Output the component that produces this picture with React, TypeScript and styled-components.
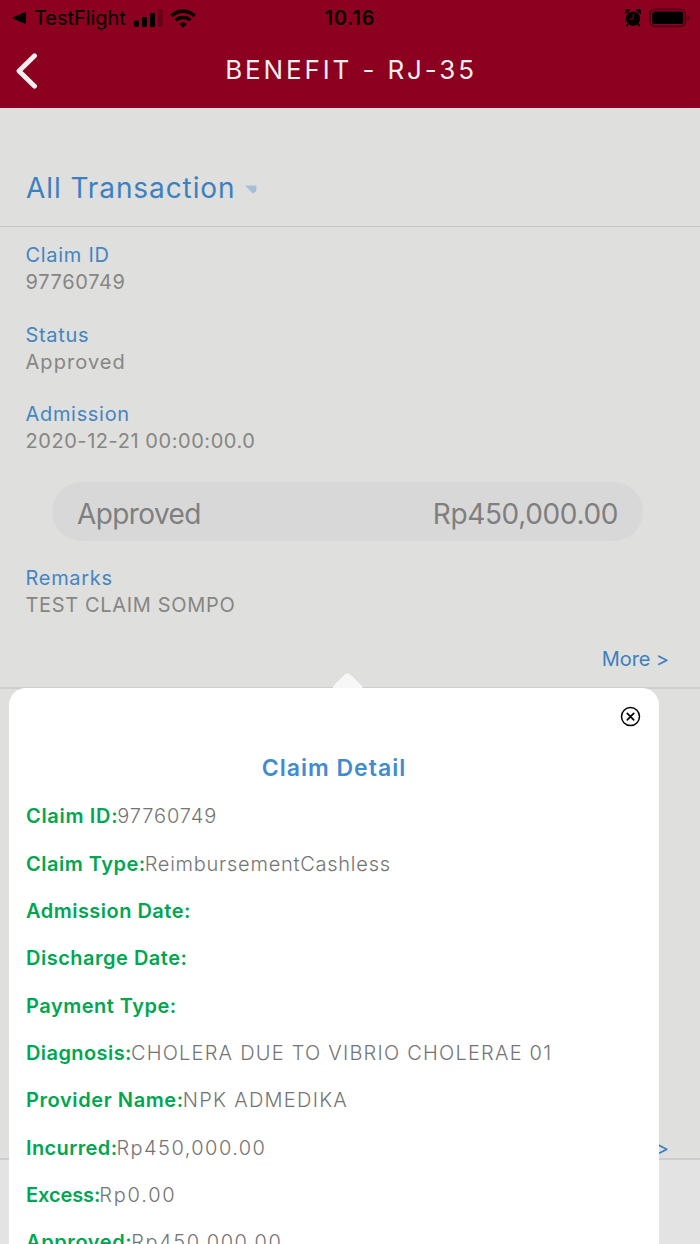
import React from 'react';
import styled, { createGlobalStyle } from 'styled-components';

const Global = createGlobalStyle`
  *, *::before, *::after { box-sizing: border-box; }
  body { margin: 0; background: #dfdfdd; }
`;

const Screen = styled.div`
  position: relative;
  width: 700px;
  height: 1244px;
  overflow: hidden;
  display: flex;
  flex-direction: column;
  background: #dfdfdd;
  font-family: Inter, 'Liberation Sans', sans-serif;
  font-size: 20px;
  line-height: 27px;
`;

const Text = styled.span<{ $track?: number }>`
  letter-spacing: ${p => p.$track ?? 0.6}px;
  white-space: nowrap;
`;

/* header */
const Header = styled.header`
  height: 108px;
  flex: none;
  background: #8c0020;
`;

const StatusBar = styled.div`
  height: 36px;
  padding: 0 10px 0 13px;
  display: grid;
  grid-template-columns: 1fr auto 1fr;
  align-items: center;
  color: #000;
`;

const StatusGroup = styled.div<{ $end?: boolean }>`
  display: flex;
  align-items: center;
  justify-content: ${p => (p.$end ? 'flex-end' : 'flex-start')};
`;

const AppName = styled(Text)`
  margin: 0 8px 0 8px;
`;

const Clock = styled(Text)`
  margin-right: 3px;
  font-size: 19.5px;
  font-weight: 600;
`;

const Signal = styled.svg`
  margin-right: 6px;
`;

const Alarm = styled.svg`
  margin-right: 8px;
`;

const NavBar = styled.div`
  height: 66px;
  padding: 0 16px;
  display: grid;
  grid-template-columns: 24px 1fr 24px;
  align-items: center;
  color: #f0eeee;
`;

const NavTitle = styled.h1`
  margin: 0;
  padding-left: 2px;
  text-align: center;
  font-size: 26px;
  font-weight: 400;
`;

const BackIcon = styled.svg`
  margin-top: 3px;
`;

/* transaction list */
const Filter = styled.div`
  height: 119px;
  flex: none;
  padding: 61px 0 0 26px;
  display: flex;
  align-items: flex-start;
  border-bottom: 1px solid #c6c6c9;
  color: #3d80c0;
  font-size: 28px;
  line-height: 38px;
`;

const Caret = styled.svg`
  margin: 16px 0 0 10px;
`;

const Transaction = styled.section<{ $height: number }>`
  height: ${p => p.$height}px;
  flex: none;
  padding: 15px 31px 0 25.5px;
  display: flex;
  flex-direction: column;
  border-bottom: 2px solid #cdcdcd;
`;

const Field = styled.div<{ $gap?: number }>`
  display: flex;
  flex-direction: column;
  margin-bottom: ${p => p.$gap ?? 0}px;
`;

const Label = styled(Text)`
  color: #4585c2;
`;

const Value = styled(Text)`
  color: #868684;
`;

const AmountPill = styled.div`
  height: 59px;
  margin: 0 26px 24px;
  padding: 6px 25px 0 25.5px;
  display: flex;
  align-items: center;
  justify-content: space-between;
  border-radius: 30px;
  background: #d8d8d8;
  color: #7f7f7f;
  font-size: 28px;
`;

const More = styled.div<{ $bottom: number }>`
  margin-top: auto;
  margin-bottom: ${p => p.$bottom}px;
  text-align: right;
  color: #3d80c0;
`;

const Rest = styled.div`
  flex: 1;
  background: #e3e3e3;
`;

/* popover */
const Popover = styled.div`
  position: absolute;
  top: 673px;
  left: 9px;
  width: 650px;
  height: 571px;
  display: flex;
  flex-direction: column;
`;

const Arrow = styled.svg`
  flex: none;
  margin-left: 323px;
`;

const Sheet = styled.div`
  flex: 1;
  min-height: 0;
  overflow: hidden;
  padding: 18px 17px 0;
  display: flex;
  flex-direction: column;
  border-radius: 17px 17px 0 0;
  background: #fff;
`;

const CloseIcon = styled.svg`
  flex: none;
  align-self: flex-end;
`;

const SheetTitle = styled.h2`
  margin: 22px 0 17.3px;
  text-align: center;
  color: #428bce;
  font-size: 23px;
  font-weight: 600;
  line-height: 36px;
`;

const DetailRow = styled.div`
  height: 47.35px;
  flex: none;
  display: flex;
  align-items: flex-start;
`;

const DetailLabel = styled(Text)`
  color: #00a651;
  font-weight: 600;
`;

const DetailValue = styled(Text)`
  margin-left: -1px;
  color: #747474;
  font-weight: 300;
`;

type Detail = { label: string; value?: string; lt: number; vt?: number };

const details: Detail[] = [
  { label: 'Claim ID:', value: '97760749', lt: 0.68, vt: 0.9 },
  { label: 'Claim Type:', value: 'ReimbursementCashless', lt: 0.5, vt: 0.75 },
  { label: 'Admission Date:', lt: 0.48 },
  { label: 'Discharge Date:', lt: 0.5 },
  { label: 'Payment Type:', lt: 0.5 },
  { label: 'Diagnosis:', value: 'CHOLERA DUE TO VIBRIO CHOLERAE 01', lt: 0.42, vt: 1.22 },
  { label: 'Provider Name:', value: 'NPK ADMEDIKA', lt: 0.6, vt: 1.27 },
  { label: 'Incurred:', value: 'Rp450,000.00', lt: 0.38, vt: 1.45 },
  { label: 'Excess:', value: 'Rp0.00', lt: -0.09, vt: 1.8 },
  { label: 'Approved:', value: 'Rp450,000.00', lt: 0.6, vt: 1.55 },
];

export default function App() {
  return (
    <>
      <Global />
      <Screen>
        <Header>
          <StatusBar>
            <StatusGroup>
              <svg width="13" height="12" viewBox="0 0 13 12">
                <path d="M0.5 5.2 L11.5 0.2 Q13 0 13 1.2 V10.8 Q13 12 11.5 11.8 L0.5 6.8 Q-0.3 6 0.5 5.2Z" />
              </svg>
              <AppName $track={-0.05}>TestFlight</AppName>
              <Signal width="30" height="18" viewBox="0 0 30 18">
                <rect x="0" y="11.5" width="5" height="6.5" rx="1.4" />
                <rect x="8" y="8" width="5" height="10" rx="1.4" />
                <rect x="16" y="4" width="5" height="14" rx="1.4" />
                <rect x="24" y="0" width="5" height="18" rx="1.4" opacity=".22" />
              </Signal>
              <svg width="26" height="19" viewBox="0 0 26 19">
                <g fill="none" stroke="#000" strokeWidth="3.3">
                  <path d="M1.4 7 A16.6 16.6 0 0 1 24.6 7" />
                  <path d="M5.7 11.4 A10.4 10.4 0 0 1 20.3 11.4" />
                </g>
                <path d="M9.2 14.9 A5.6 5.6 0 0 1 16.8 14.9 L13 18.7Z" />
              </svg>
            </StatusGroup>
            <Clock $track={0.9}>10.16</Clock>
            <StatusGroup $end>
              <Alarm width="16" height="18" viewBox="0 0 16 18">
                <circle cx="8" cy="9.6" r="7.2" />
                <path d="M0.6 4.4 A2.7 2.7 0 0 1 5 1.2Z M15.4 4.4 A2.7 2.7 0 0 0 11 1.2Z" stroke="#000" strokeWidth=".8" />
                <path d="M3 15 L1.8 16.6 M13 15 L14.2 16.6" stroke="#000" strokeWidth="1.8" strokeLinecap="round" />
                <path d="M8.2 5 V10 H4.4" fill="none" stroke="#8c0020" strokeWidth="1" />
              </Alarm>
              <svg width="41" height="20" viewBox="0 0 41 20">
                <rect x="0.9" y="1.2" width="35.4" height="17.2" rx="5" fill="none" stroke="#000" strokeOpacity=".45" strokeWidth="1.6" />
                <rect x="3.2" y="3.6" width="31" height="12.4" rx="2.6" />
                <path d="M38.4 6.8 Q40.6 8 40.6 9.8 Q40.6 11.6 38.4 12.8Z" opacity=".45" />
              </svg>
            </StatusGroup>
          </StatusBar>
          <NavBar>
            <BackIcon width="22" height="36" viewBox="0 0 22 36">
              <path d="M18.6 2.8 L3 18 L18.6 33.2" fill="none" stroke="#f0eeee" strokeWidth="4.8" strokeLinecap="round" strokeLinejoin="round" />
            </BackIcon>
            <NavTitle>
              <Text $track={2.87}>BENEFIT - RJ-35</Text>
            </NavTitle>
          </NavBar>
        </Header>

        <Filter>
          <Text $track={0.91}>All Transaction</Text>
          <Caret width="12" height="9" viewBox="0 0 12 9">
            <path d="M0 0.5 H11.4 V6 L8 8.8Z" fill="#a5c0d6" />
          </Caret>
        </Filter>

        <Transaction $height={462}>
          <Field $gap={26}>
            <Label $track={0.71}>Claim ID</Label>
            <Value $track={0.66}>97760749</Value>
          </Field>
          <Field $gap={25}>
            <Label $track={0.69}>Status</Label>
            <Value $track={1.06}>Approved</Value>
          </Field>
          <Field $gap={27}>
            <Label $track={0.68}>Admission</Label>
            <Value $track={0.56}>2020-12-21 00:00:00.0</Value>
          </Field>
          <AmountPill>
            <Text $track={-0.6}>Approved</Text>
            <Text $track={-0.36}>Rp450,000.00</Text>
          </AmountPill>
          <Field>
            <Label $track={0.7}>Remarks</Label>
            <Value $track={0.66}>TEST CLAIM SOMPO</Value>
          </Field>
          <More $bottom={14}>
            <Text $track={-0.1}>More &gt;</Text>
          </More>
        </Transaction>
        <Transaction $height={471}>
          <More $bottom={-4}>
            <Text $track={-0.1}>More &gt;</Text>
          </More>
        </Transaction>
        <Rest />

        <Popover>
          <Arrow width="32" height="15" viewBox="0 0 32 15">
            <path d="M0.6 15 Q1 13.2 2.4 11.8 L12.6 1.8 Q15.6 -1 18.6 1.8 L28.8 11.8 Q30.2 13.2 30.6 15Z" fill="#f7f7f7" />
          </Arrow>
          <Sheet>
            <CloseIcon width="22" height="22" viewBox="0 0 22 22">
              <g fill="none" stroke="#000" strokeLinecap="round">
                <circle cx="10.5" cy="10.6" r="9" strokeWidth="1.5" />
                <path d="M7.3 7.4 L13.7 13.8 M13.7 7.4 L7.3 13.8" strokeWidth="1.7" />
              </g>
            </CloseIcon>
            <SheetTitle>
              <Text $track={1}>Claim Detail</Text>
            </SheetTitle>
            {details.map((d, i) => (
              <DetailRow key={i}>
                <DetailLabel $track={d.lt}>{d.label}</DetailLabel>
                {d.value && <DetailValue $track={d.vt}>{d.value}</DetailValue>}
              </DetailRow>
            ))}
          </Sheet>
        </Popover>
      </Screen>
    </>
  );
}
